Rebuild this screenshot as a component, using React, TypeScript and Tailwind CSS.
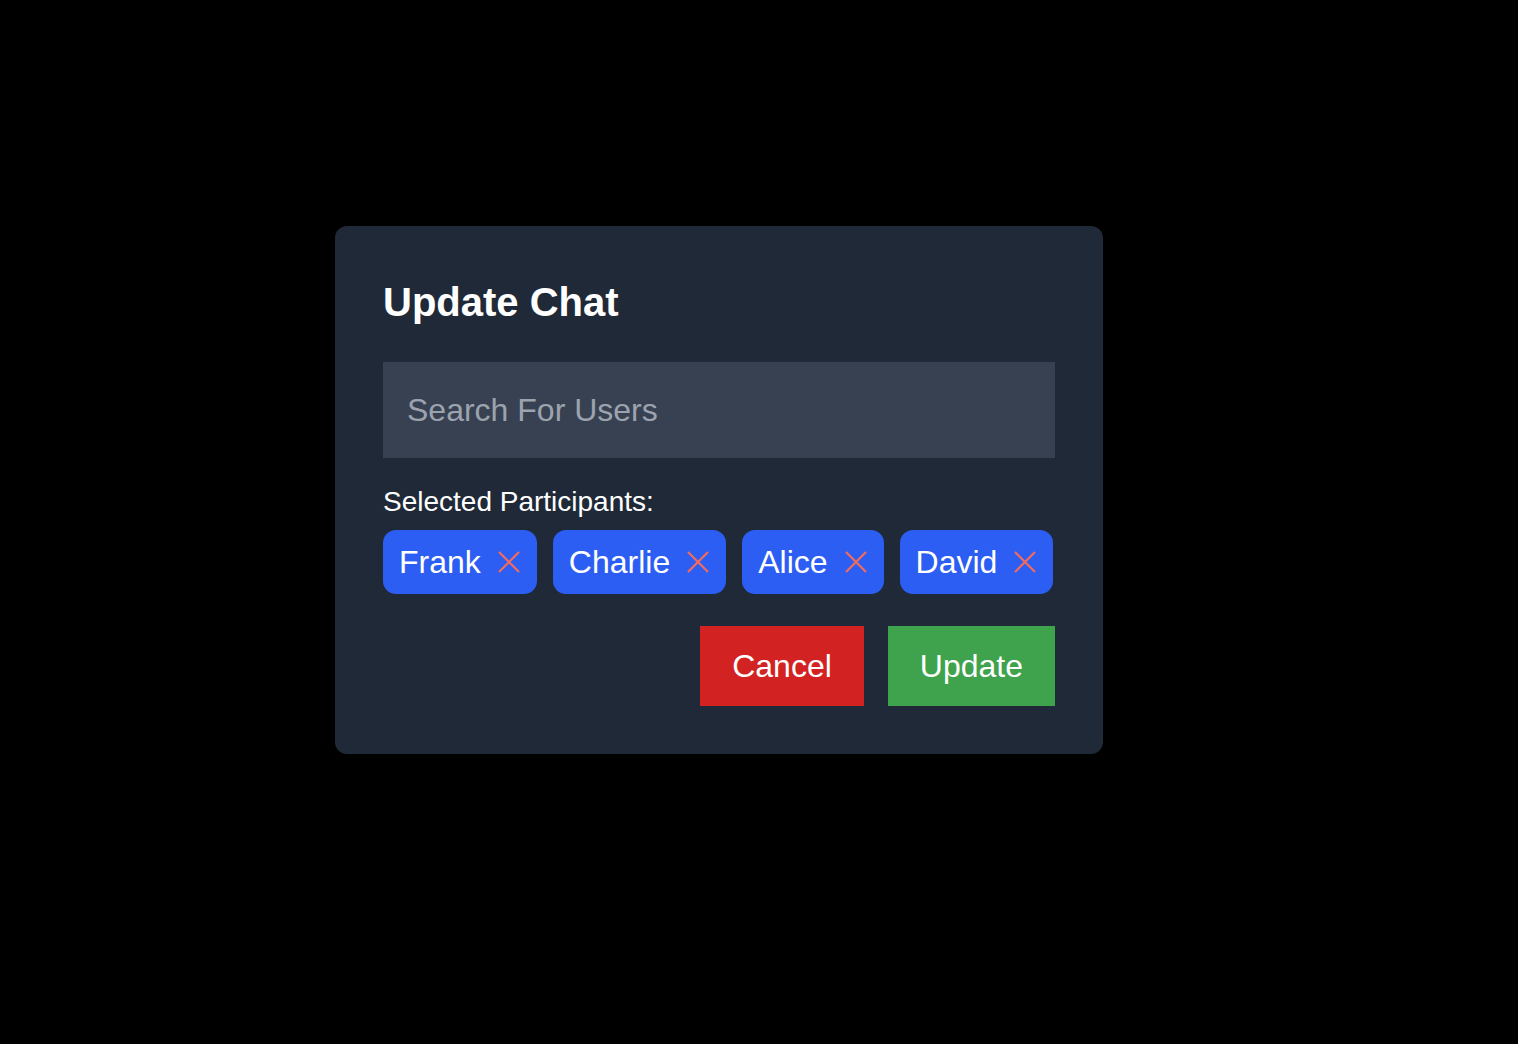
import React from "react";

const XIcon = () => (
  <svg width="24" height="24" viewBox="0 0 24 24" className="ml-4 shrink-0" aria-hidden="true">
    <path d="M2 2 L22 22 M22 2 L2 22" stroke="#f26b5e" strokeWidth="2.2" strokeLinecap="butt" fill="none" />
  </svg>
);

const Chip = ({ name }: { name: string }) => (
  <div className="flex items-center rounded-[13px] bg-[#2d5ef3] px-4 py-2 text-[32px] leading-[48px] text-white">
    <span>{name}</span>
    <XIcon />
  </div>
);

export default function App() {
  const names = ["Frank", "Charlie", "Alice", "David"];
  return (
    <div
      className="flex min-h-screen items-center justify-center bg-black pb-[64px] pr-[80px]"
      style={{ fontFamily: '"Liberation Sans", Arial, sans-serif' }}
    >
      <div className="w-[768px] rounded-xl bg-[#1f2937] p-12">
        <h2 className="mb-8 text-[40px] font-bold leading-[56px] text-white">Update Chat</h2>
        <input
          type="text"
          placeholder="Search For Users"
          className="mb-6 block w-full bg-[#374151] px-6 py-6 text-[32px] leading-[48px] text-white outline-none placeholder:text-[#9ca3af]"
        />
        <p className="text-[28px] leading-[40px] text-white">Selected Participants:</p>
        <div className="mt-2 flex flex-wrap gap-4">
          {names.map((n) => (
            <Chip key={n} name={n} />
          ))}
        </div>
        <div className="mt-8 flex justify-end gap-6">
          <button className="bg-[#d32222] px-8 py-4 text-[32px] leading-[48px] text-white">Cancel</button>
          <button className="bg-[#3ea34c] px-8 py-4 text-[32px] leading-[48px] text-white">Update</button>
        </div>
      </div>
    </div>
  );
}
